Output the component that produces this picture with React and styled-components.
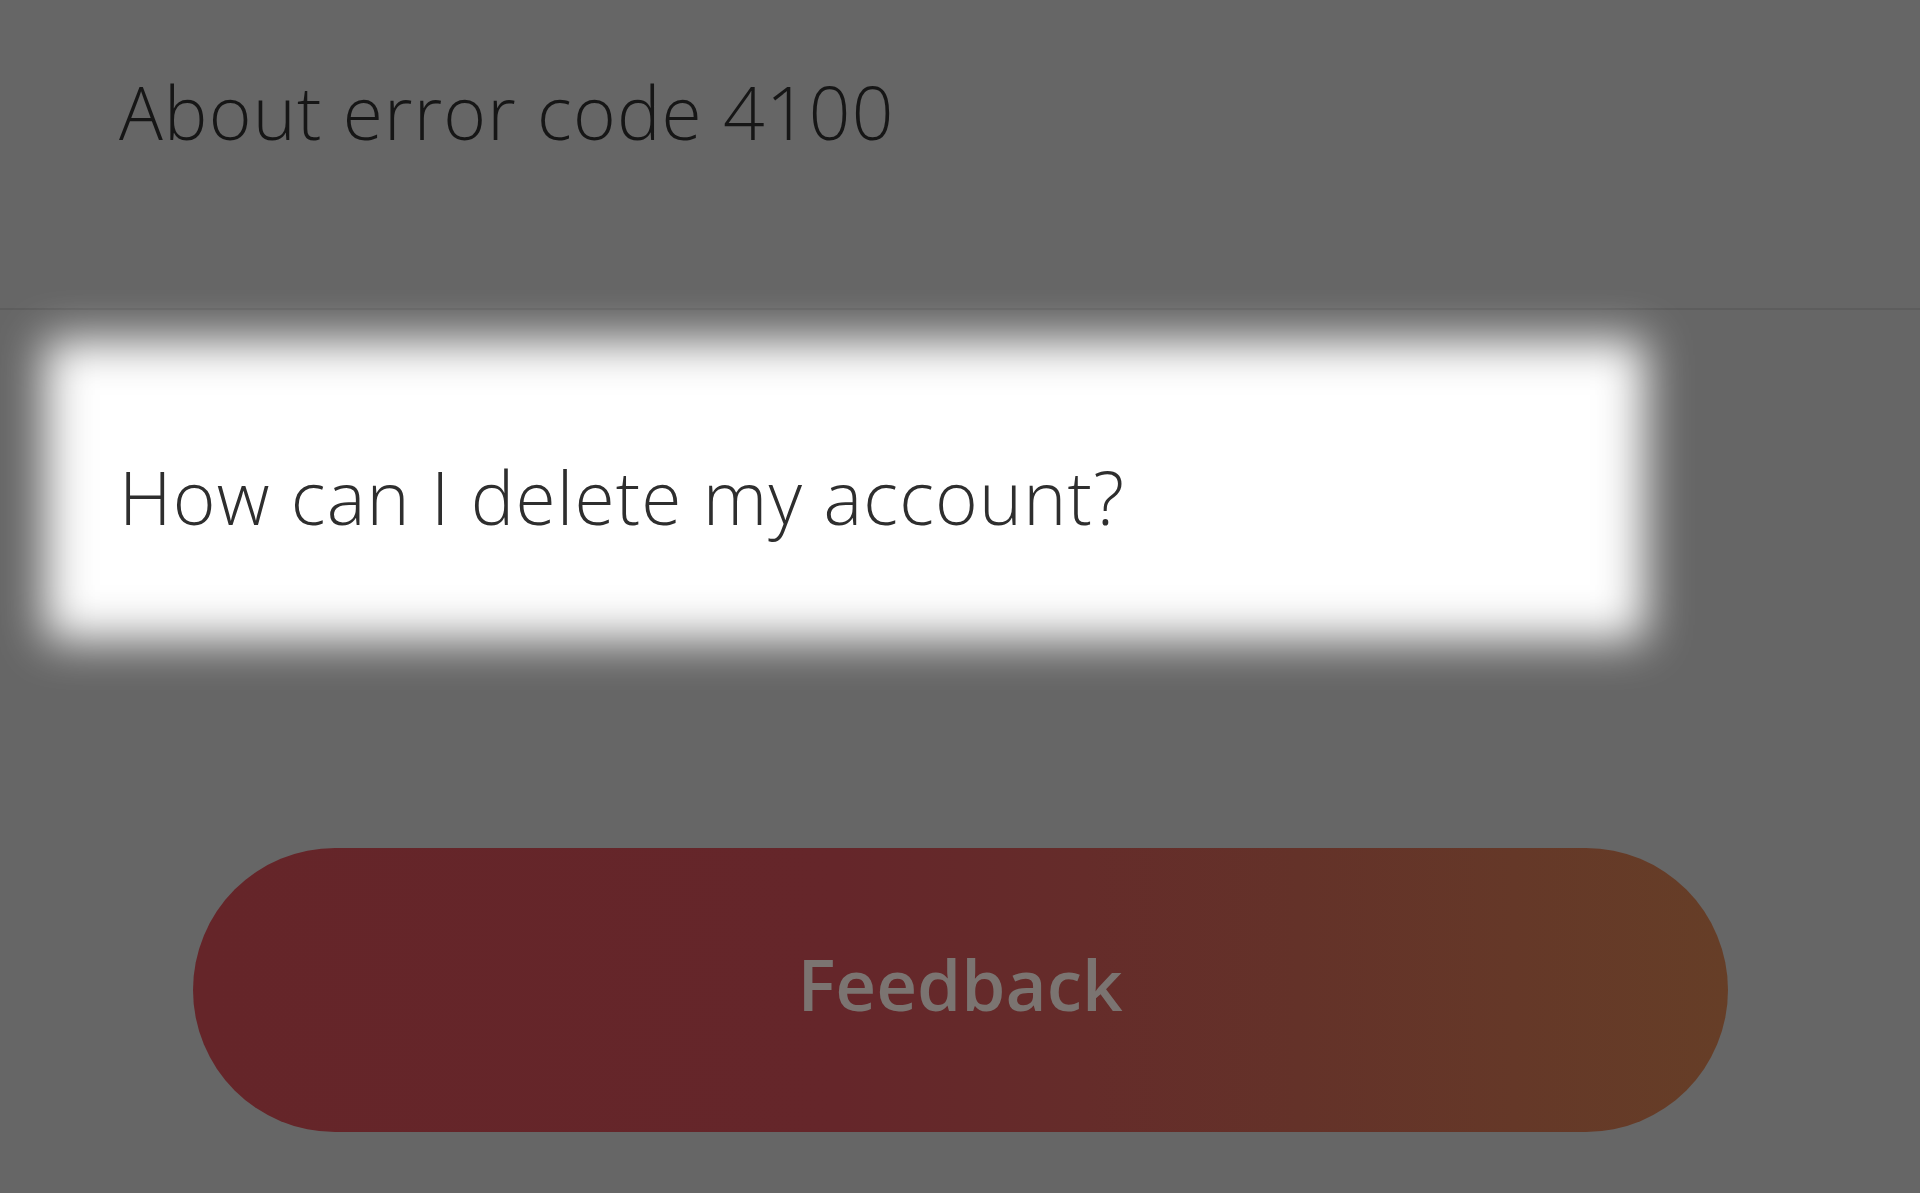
import React from "react";
import styled, { createGlobalStyle } from "styled-components";

const GlobalStyle = createGlobalStyle`
  html, body {
    margin: 0;
    padding: 0;
    background: #666666;
  }
  body {
    font-family: "Open Sans", "Liberation Sans", sans-serif;
    -webkit-font-smoothing: antialiased;
  }
`;

const Screen = styled.div`
  width: 1920px;
  height: 1193px;
  overflow: hidden;
  background: #666666;
  display: flex;
  flex-direction: column;
`;

const PlainRow = styled.div`
  height: 308px;
  box-sizing: border-box;
  padding: 75px 0 0 119px;
`;

const RowText = styled.div`
  font-size: 73px;
  line-height: 1;
  font-weight: 300;
  letter-spacing: 1.2px;
  white-space: nowrap;
  color: ${(p) => (p.$lit ? "#2e2e2e" : "#161616")};
`;

const Separator = styled.div`
  height: 2px;
  background: #5d5d5d;
  flex-shrink: 0;
`;

const HighlightArea = styled.div`
  padding: 30px 0 0 45px;
`;

const Highlight = styled.div`
  position: relative;
  width: 1600px;
  height: 300px;
  box-sizing: border-box;
  padding: 120px 0 0 74px;

  &::before {
    content: "";
    position: absolute;
    inset: 0;
    background: #ffffff;
    filter: blur(23px);
  }

  & > * {
    position: relative;
  }
`;

const ButtonArea = styled.div`
  padding-top: 208px;
  display: flex;
  justify-content: center;
`;

const FeedbackButton = styled.button`
  width: 1535px;
  height: 284px;
  border: none;
  border-radius: 142px;
  box-sizing: border-box;
  padding: 0 0 14px 0;
  margin: 0;
  display: flex;
  align-items: center;
  justify-content: center;
  background: linear-gradient(
    90deg,
    #652529 0%,
    #65262a 42%,
    #652c2a 58%,
    #643229 72%,
    #663e27 100%
  );
  font-family: "Open Sans", "Liberation Sans", sans-serif;
  font-size: 71px;
  line-height: 1;
  font-weight: 600;
  color: #7b7471;
  cursor: pointer;
`;

export default function App() {
  return (
    <>
      <GlobalStyle />
      <Screen>
        <PlainRow>
          <RowText>About error code 4100</RowText>
        </PlainRow>
        <Separator />
        <HighlightArea>
          <Highlight>
            <RowText $lit>How can I delete my account?</RowText>
          </Highlight>
        </HighlightArea>
        <ButtonArea>
          <FeedbackButton>Feedback</FeedbackButton>
        </ButtonArea>
      </Screen>
    </>
  );
}
